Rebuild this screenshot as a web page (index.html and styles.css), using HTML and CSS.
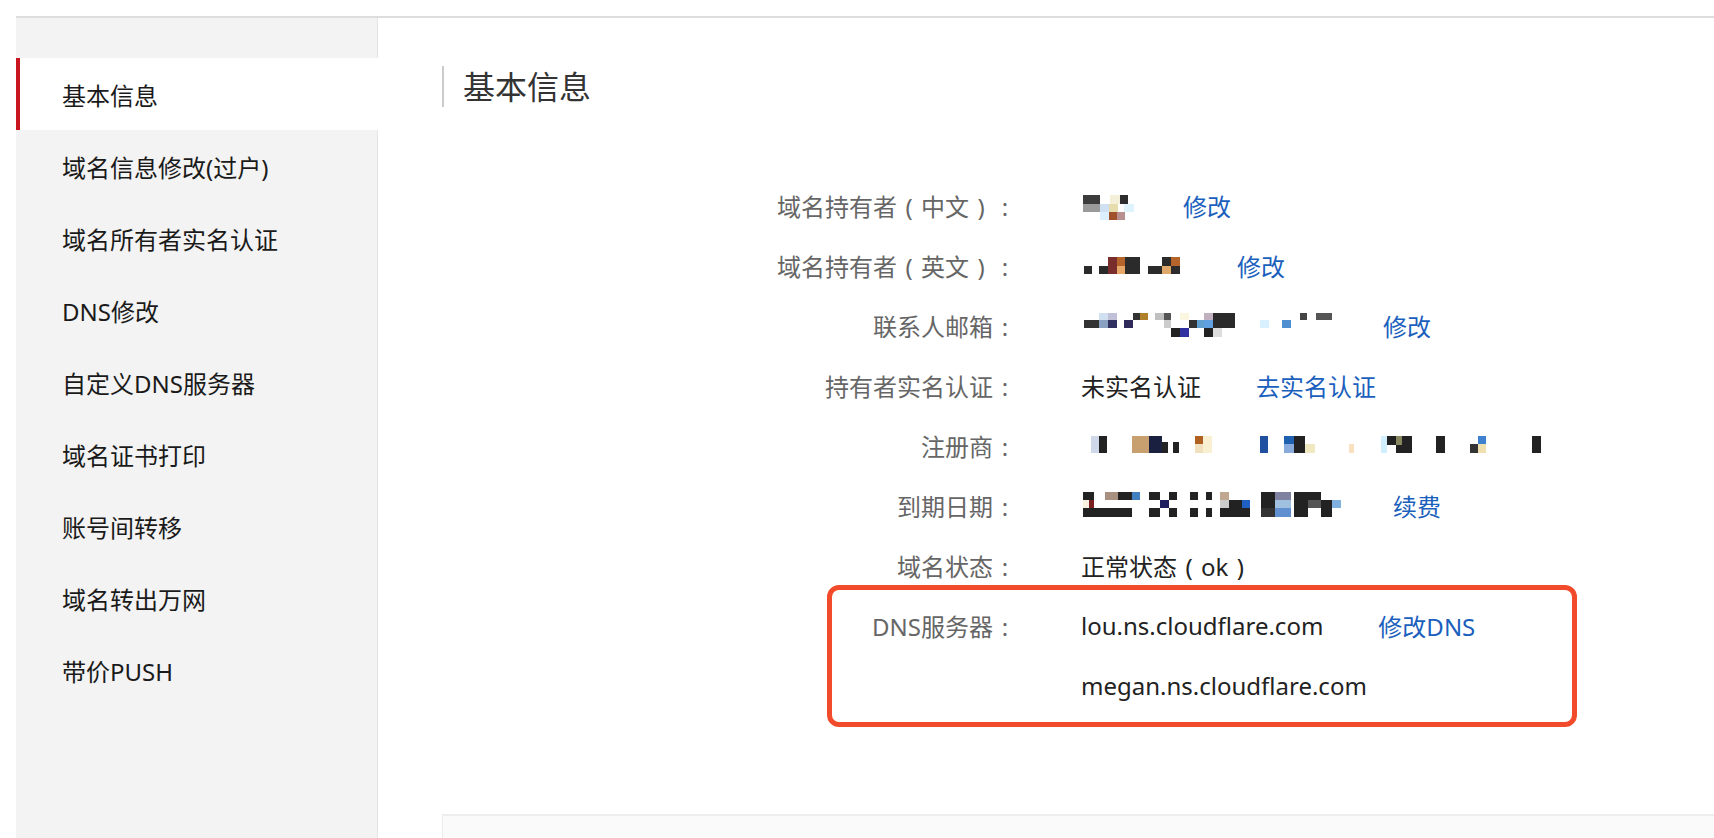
FILE: index.html
```html
<!DOCTYPE html>
<html lang="zh-CN">
<head>
<meta charset="utf-8">
<title>基本信息</title>
<link rel="stylesheet" href="styles.css">
</head>
<body>
<div class="page">
  <div class="topbar"></div>
  <div class="layout">
    <aside class="sidebar">
      <ul class="menu">
        <li class="menu-item active">基本信息</li>
        <li class="menu-item">域名信息修改(过户)</li>
        <li class="menu-item">域名所有者实名认证</li>
        <li class="menu-item">DNS修改</li>
        <li class="menu-item">自定义DNS服务器</li>
        <li class="menu-item">域名证书打印</li>
        <li class="menu-item">账号间转移</li>
        <li class="menu-item">域名转出万网</li>
        <li class="menu-item">带价PUSH</li>
      </ul>
    </aside>
    <main class="main">
      <h1 class="page-title">基本信息</h1>
      <div class="info">
        <div class="row">
          <div class="label">域名持有者<span class="fw">(</span>中文<span class="fw">)</span><span class="fw">:</span></div>
          <div class="value">
            <svg class="mosaic" width="47" height="26" viewBox="0 0 47 26" shape-rendering="crispEdges">
              <g transform="translate(2,3)">
                <rect x="0" y="0" width="17" height="9" fill="#3c3c3c"/>
                <rect x="27" y="0" width="10" height="9" fill="#f3efd9"/>
                <rect x="37" y="0" width="8" height="9" fill="#2e2e2e"/>
                <rect x="0" y="9" width="17" height="8" fill="#9a9a9a"/>
                <rect x="17" y="9" width="9" height="8" fill="#cfe0f2"/>
                <rect x="26" y="9" width="9" height="8" fill="#e6dcae"/>
                <rect x="41" y="9" width="10" height="8" fill="#e0f4fd"/>
                <rect x="17" y="17" width="9" height="8" fill="#dcefff"/>
                <rect x="26" y="17" width="8" height="8" fill="#a0502a"/>
                <rect x="34" y="17" width="8" height="8" fill="#b89090"/>
              </g>
            </svg>
            <a class="link">修改</a>
          </div>
        </div>
        <div class="row">
          <div class="label">域名持有者<span class="fw">(</span>英文<span class="fw">)</span><span class="fw">:</span></div>
          <div class="value">
            <svg class="mosaic" width="101" height="20" viewBox="0 0 101 20" shape-rendering="crispEdges">
              <g transform="translate(2,2)">
                <rect x="1" y="9" width="8" height="8" fill="#2a2a2a"/>
                <rect x="16" y="9" width="9" height="8" fill="#2a2a2a"/>
                <rect x="25" y="0" width="9" height="17" fill="#7a2d2d"/>
                <rect x="34" y="0" width="8" height="9" fill="#b5642c"/>
                <rect x="34" y="9" width="8" height="8" fill="#e8a868"/>
                <rect x="42" y="0" width="15" height="17" fill="#2b2b2b"/>
                <rect x="65" y="9" width="14" height="8" fill="#2b2b2b"/>
                <rect x="79" y="0" width="9" height="9" fill="#2b2b2b"/>
                <rect x="79" y="9" width="9" height="8" fill="#e0a868"/>
                <rect x="88" y="0" width="9" height="9" fill="#b5642c"/>
                <rect x="88" y="9" width="9" height="8" fill="#2b2b2b"/>
              </g>
            </svg>
            <a class="link">修改</a>
          </div>
        </div>
        <div class="row">
          <div class="label">联系人邮箱<span class="fw">:</span></div>
          <div class="value">
            <svg class="mosaic" width="247" height="26" viewBox="0 0 247 26" shape-rendering="crispEdges">
              <g transform="translate(2,1)">
                <rect x="1" y="7" width="15" height="8" fill="#333333"/>
                <rect x="16" y="0" width="9" height="7" fill="#d0e0f0"/>
                <rect x="16" y="7" width="9" height="8" fill="#8aa0c0"/>
                <rect x="25" y="0" width="9" height="7" fill="#c0c0d8"/>
                <rect x="25" y="7" width="9" height="8" fill="#303060"/>
                <rect x="41" y="7" width="9" height="8" fill="#302a5a"/>
                <rect x="50" y="0" width="7" height="7" fill="#333333"/>
                <rect x="57" y="0" width="8" height="7" fill="#b0802a"/>
                <rect x="72" y="0" width="9" height="7" fill="#c0c0c0"/>
                <rect x="81" y="0" width="7" height="7" fill="#555555"/>
                <rect x="81" y="7" width="7" height="8" fill="#cccccc"/>
                <rect x="97" y="0" width="9" height="7" fill="#fbf6e0"/>
                <rect x="88" y="15" width="9" height="9" fill="#222222"/>
                <rect x="97" y="15" width="9" height="9" fill="#3030a0"/>
                <rect x="106" y="7" width="8" height="8" fill="#333333"/>
                <rect x="114" y="7" width="7" height="8" fill="#60a0d0"/>
                <rect x="121" y="0" width="9" height="7" fill="#c0b0c0"/>
                <rect x="121" y="7" width="9" height="8" fill="#60a0e0"/>
                <rect x="121" y="15" width="9" height="9" fill="#222222"/>
                <rect x="130" y="0" width="22" height="15" fill="#2a2a2a"/>
                <rect x="130" y="15" width="9" height="9" fill="#dddddd"/>
                <rect x="177" y="7" width="9" height="8" fill="#d8f0ff"/>
                <rect x="199" y="7" width="9" height="8" fill="#5090d0"/>
                <rect x="217" y="0" width="7" height="7" fill="#444444"/>
                <rect x="233" y="0" width="16" height="7" fill="#555555"/>
              </g>
            </svg>
            <a class="link">修改</a>
          </div>
        </div>
        <div class="row">
          <div class="label">持有者实名认证<span class="fw">:</span></div>
          <div class="value"><span class="text">未实名认证</span><a class="link">去实名认证</a></div>
        </div>
        <div class="row">
          <div class="label">注册商<span class="fw">:</span></div>
          <div class="value">
            <svg class="mosaic" width="462" height="20" viewBox="0 0 462 20" shape-rendering="crispEdges">
              <g transform="translate(9,1)">
                <rect x="1" y="0" width="8" height="17" fill="#cfd8e8"/>
                <rect x="9" y="0" width="8" height="17" fill="#222222"/>
                <rect x="42" y="0" width="17" height="17" fill="#c8a070"/>
                <rect x="59" y="0" width="13" height="17" fill="#1a2040"/>
                <rect x="72" y="6" width="6" height="11" fill="#222222"/>
                <rect x="83" y="6" width="6" height="11" fill="#222222"/>
                <rect x="105" y="0" width="8" height="8" fill="#b06020"/>
                <rect x="105" y="8" width="8" height="9" fill="#f0e0c0"/>
                <rect x="113" y="0" width="9" height="17" fill="#f8f0d0"/>
                <rect x="170" y="0" width="8" height="17" fill="#2050a0"/>
                <rect x="194" y="0" width="10" height="8" fill="#2060b0"/>
                <rect x="194" y="8" width="10" height="9" fill="#88aadd"/>
                <rect x="204" y="0" width="11" height="17" fill="#222222"/>
                <rect x="215" y="8" width="10" height="9" fill="#f0e8c0"/>
                <rect x="259" y="8" width="5" height="9" fill="#f8e0c0"/>
                <rect x="291" y="0" width="6" height="17" fill="#d0f0ff"/>
                <rect x="297" y="0" width="9" height="9" fill="#222222"/>
                <rect x="306" y="0" width="16" height="17" fill="#222222"/>
                <rect x="306" y="0" width="6" height="9" fill="#888860"/>
                <rect x="346" y="0" width="9" height="17" fill="#222222"/>
                <rect x="380" y="8" width="8" height="9" fill="#333333"/>
                <rect x="388" y="0" width="8" height="8" fill="#4080d0"/>
                <rect x="388" y="8" width="8" height="9" fill="#f0e0b0"/>
                <rect x="442" y="0" width="9" height="17" fill="#222222"/>
              </g>
            </svg>
          </div>
        </div>
        <div class="row">
          <div class="label">到期日期<span class="fw">:</span></div>
          <div class="value">
            <svg class="mosaic" width="257" height="26" viewBox="0 0 257 26" shape-rendering="crispEdges">
              <g transform="translate(2,0)">
                <rect x="0" y="0" width="11" height="8" fill="#222222"/>
                <rect x="0" y="8" width="6" height="8" fill="#f8f0e0"/>
                <rect x="6" y="8" width="5" height="8" fill="#7a2020"/>
                <rect x="0" y="16" width="11" height="9" fill="#222222"/>
                <rect x="11" y="16" width="11" height="9" fill="#222222"/>
                <rect x="22" y="0" width="13" height="8" fill="#a89080"/>
                <rect x="22" y="16" width="13" height="9" fill="#222222"/>
                <rect x="35" y="0" width="14" height="8" fill="#222222"/>
                <rect x="35" y="16" width="14" height="9" fill="#222222"/>
                <rect x="49" y="0" width="8" height="8" fill="#4080c0"/>
                <rect x="66" y="0" width="11" height="8" fill="#222222"/>
                <rect x="66" y="16" width="11" height="9" fill="#222222"/>
                <rect x="77" y="8" width="9" height="8" fill="#202060"/>
                <rect x="86" y="0" width="8" height="8" fill="#222222"/>
                <rect x="86" y="16" width="8" height="9" fill="#222222"/>
                <rect x="107" y="0" width="8" height="8" fill="#222222"/>
                <rect x="107" y="16" width="8" height="9" fill="#222222"/>
                <rect x="123" y="0" width="6" height="8" fill="#222222"/>
                <rect x="123" y="16" width="6" height="9" fill="#222222"/>
                <rect x="137" y="0" width="9" height="8" fill="#c0a890"/>
                <rect x="137" y="8" width="9" height="8" fill="#cccccc"/>
                <rect x="137" y="16" width="9" height="9" fill="#222222"/>
                <rect x="146" y="8" width="13" height="8" fill="#222222"/>
                <rect x="159" y="8" width="8" height="8" fill="#2060c0"/>
                <rect x="146" y="16" width="21" height="9" fill="#222222"/>
                <rect x="178" y="0" width="14" height="16" fill="#222222"/>
                <rect x="178" y="16" width="14" height="9" fill="#333333"/>
                <rect x="192" y="0" width="16" height="8" fill="#8080a0"/>
                <rect x="192" y="8" width="16" height="8" fill="#a0c0e0"/>
                <rect x="192" y="16" width="16" height="9" fill="#6090d0"/>
                <rect x="211" y="0" width="14" height="25" fill="#222222"/>
                <rect x="225" y="0" width="13" height="8" fill="#222222"/>
                <rect x="225" y="8" width="13" height="8" fill="#555555"/>
                <rect x="238" y="8" width="11" height="8" fill="#222222"/>
                <rect x="238" y="16" width="11" height="9" fill="#222222"/>
                <rect x="249" y="8" width="9" height="8" fill="#80b0e0"/>
              </g>
            </svg>
            <a class="link">续费</a>
          </div>
        </div>
        <div class="row">
          <div class="label">域名状态<span class="fw">:</span></div>
          <div class="value"><span class="text">正常状态<span class="fw">(</span>ok<span class="fw">)</span></span></div>
        </div>
        <div class="dns-group">
          <div class="row">
            <div class="label">DNS服务器<span class="fw">:</span></div>
            <div class="value"><span class="text">lou.ns.cloudflare.com</span><a class="link">修改DNS</a></div>
          </div>
          <div class="row">
            <div class="label"></div>
            <div class="value"><span class="text">megan.ns.cloudflare.com</span></div>
          </div>
        </div>
      </div>
      <div class="panel"></div>
    </main>
  </div>
</div>
</body>
</html>
```

FILE: styles.css
```css
*,
*::before,
*::after {
  box-sizing: border-box;
}

html,
body {
  margin: 0;
  padding: 0;
  height: 100%;
}

body {
  font-family: "Noto Sans", "Noto Sans CJK SC", sans-serif;
  background: #ffffff;
  color: #222222;
  overflow: hidden;
}

.page {
  height: 100vh;
  padding: 16px 0 0 16px;
  display: flex;
  flex-direction: column;
}

.topbar {
  border-top: 2px solid #dddddd;
}

.layout {
  flex: 1;
  display: flex;
  min-height: 0;
}

.sidebar {
  width: 362px;
  flex-shrink: 0;
  background: #f3f3f3;
  border-right: 1px solid #e4e4e4;
  padding-top: 40px;
}

.menu {
  list-style: none;
  margin: 0;
  padding: 0;
}

.menu-item {
  height: 72px;
  display: flex;
  align-items: center;
  padding-left: 42px;
  border-left: 4px solid transparent;
  font-size: 24px;
  color: #1a1a1a;
  white-space: nowrap;
}

.menu-item.active {
  background: #ffffff;
  border-left-color: #c9151e;
  margin-right: -1px;
}

.main {
  flex: 1;
  min-width: 0;
  padding: 48px 0 0 64px;
}

.page-title {
  margin: 0;
  font-size: 32px;
  font-weight: 400;
  line-height: 41px;
  color: #333333;
  border-left: 2px solid #cccccc;
  padding-left: 19px;
}

.info {
  margin: 68px 0 0 295px;
}

.row {
  display: flex;
  align-items: center;
  height: 60px;
}

.label {
  width: 280px;
  flex-shrink: 0;
  margin-right: 64px;
  text-align: right;
  font-size: 24px;
  color: #666666;
  white-space: nowrap;
}

.fw {
  display: inline-block;
  width: 1em;
  text-align: center;
}

.value {
  display: flex;
  align-items: center;
  font-size: 24px;
  color: #222222;
  white-space: nowrap;
}

.mosaic {
  display: block;
  overflow: visible;
}

.link {
  margin-left: 55px;
  color: #1b5fbd;
  cursor: pointer;
}

.dns-group {
  position: relative;
}

.dns-group::before {
  content: "";
  position: absolute;
  left: 90px;
  top: -10px;
  width: 750px;
  height: 142px;
  border: 5px solid #f24b2b;
  border-radius: 12px;
  pointer-events: none;
}

.panel {
  margin-top: 99px;
  height: 24px;
  background: #fafafa;
  border-top: 2px solid #eeeeee;
  border-left: 1px solid #ebebeb;
}
```
